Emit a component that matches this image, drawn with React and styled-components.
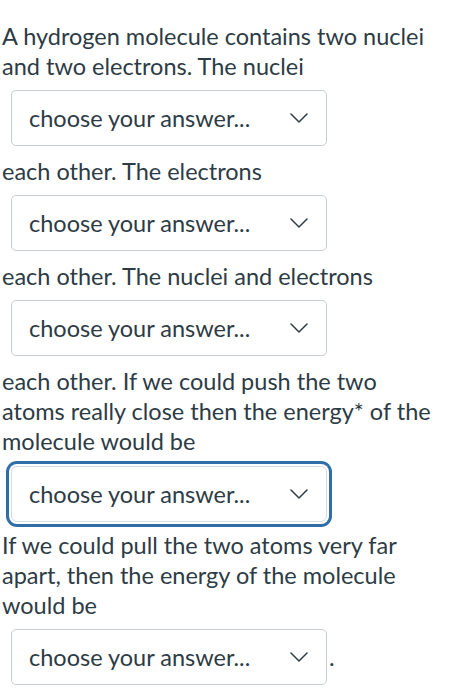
import React from 'react';
import styled, { createGlobalStyle, css } from 'styled-components';

const GlobalStyle = createGlobalStyle`
  html, body {
    margin: 0;
    padding: 0;
    background: #ffffff;
  }
  body {
    font-family: Lato, "Noto Sans", "Liberation Sans", sans-serif;
    color: #2d3b45;
  }
`;

const QuestionText = styled.div`
  padding: 21px 20px 0 2px;
  font-size: 23.5px;
  line-height: 30px;
`;

const Select = styled.span`
  display: inline-flex;
  align-items: center;
  justify-content: space-between;
  box-sizing: border-box;
  width: 316px;
  height: 56px;
  margin: 9px 2px 10px 9px;
  padding: 0 18px 0 17px;
  background: #ffffff;
  border: 1px solid #c7cdd1;
  border-radius: 5px;
  line-height: 30px;
  cursor: pointer;

  ${({ $focused }) =>
    $focused &&
    css`
      margin-top: 10px;
      margin-bottom: 8px;
      border-color: #d3dde7;
      box-shadow: 0 0 0 2px #ffffff, 0 0 0 5px #2f6ea6;
      border-radius: 6px;
    `}
`;

const Placeholder = styled.span`
  color: #2d3b45;
`;

const Chevron = () => (
  <svg width="18" height="10" viewBox="0 0 18 10" fill="none">
    <path d="M1 1 L9 9 L17 1" stroke="#2d3b45" strokeWidth="1.5" strokeLinecap="round" strokeLinejoin="round" />
  </svg>
);

const Dropdown = ({ focused }) => (
  <Select $focused={focused}>
    <Placeholder>choose your answer...</Placeholder>
    <Chevron />
  </Select>
);

// each dropdown sits on its own line
const parts = [
  { text: 'A hydrogen molecule contains two nuclei and two electrons. The nuclei ' },
  { drop: true, br: true },
  { text: 'each other. The electrons ' },
  { drop: true, br: true },
  { text: 'each other. The nuclei and electrons ' },
  { drop: true, br: true },
  { text: 'each other. If we could push the two atoms really close then the energy* of the molecule would be ' },
  { drop: true, focused: true, br: true },
  { text: 'If we could pull the two atoms very far apart, then the energy of the molecule would be' },
  { drop: true, brBefore: true },
  { text: '.' },
];

export default function App() {
  return (
    <>
      <GlobalStyle />
      <QuestionText>
        {parts.map((p, i) =>
          p.drop ? (
            <React.Fragment key={i}>
              {p.brBefore && <br />}
              <Dropdown focused={p.focused} />
              {p.br && <br />}
            </React.Fragment>
          ) : (
            <React.Fragment key={i}>{p.text}</React.Fragment>
          )
        )}
      </QuestionText>
    </>
  );
}
